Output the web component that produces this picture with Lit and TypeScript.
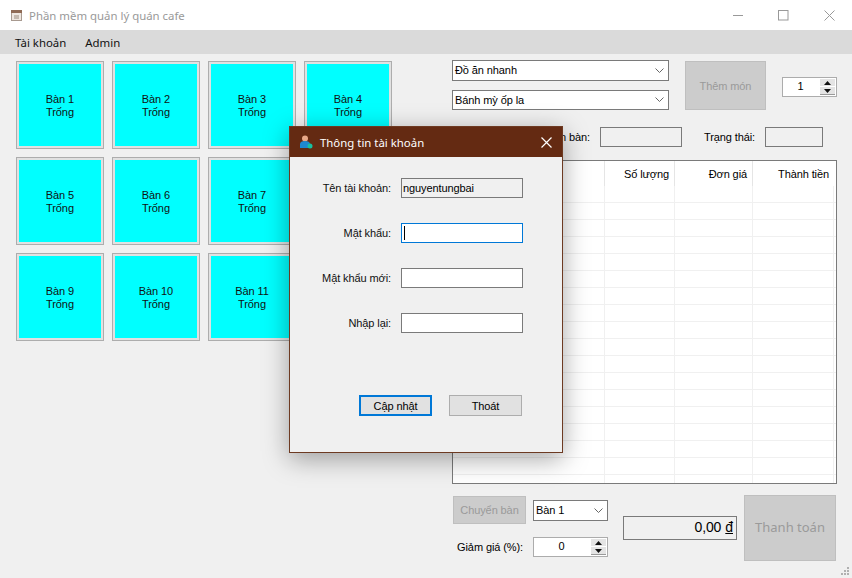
import { LitElement, html, css, svg } from 'lit';
import { customElement } from 'lit/decorators.js';

const chevron = svg`<svg class="chev" width="9" height="5" viewBox="0 0 9 5"><path d="M.5.5l4 4 4-4" fill="none" stroke="#666"/></svg>`;

const spinArrows = html`<div class="spin-btns">
  <div class="spin-btn"><svg width="7" height="4" viewBox="0 0 7 4"><path d="M3.5 0L7 4H0z" fill="#111"/></svg></div>
  <div class="spin-btn"><svg width="7" height="4" viewBox="0 0 7 4"><path d="M0 0h7L3.5 4z" fill="#111"/></svg></div>
</div>`;

@customElement('app-root')
export class AppRoot extends LitElement {
  static styles = css`
    :host {
      display: block;
      position: relative;
      width: 852px;
      height: 578px;
      overflow: hidden;
      background: #f0f0f0;
      font-family: 'Liberation Sans', Arial, sans-serif;
      font-size: 11px;
      letter-spacing: -0.1px;
      color: #000;
    }

    .titlebar {
      height: 30px;
      background: #fff;
      display: flex;
      align-items: center;
      padding-left: 10px;
      color: #999;
      font-family: 'Noto Sans', sans-serif;
      font-size: 11.4px;
      letter-spacing: 0;
    }

    .titlebar .app-icon {
      margin-right: 6px;
    }

    .win-btns {
      margin-left: auto;
      display: flex;
    }

    .win-btn {
      width: 46px;
      height: 30px;
      display: flex;
      align-items: center;
      justify-content: center;
    }

    .menu {
      height: 24px;
      background: #dadada;
      display: flex;
      align-items: center;
      padding-left: 15px;
      gap: 19px;
      font-family: 'Noto Sans', sans-serif;
      font-size: 11.4px;
      letter-spacing: 0;
      color: #111;
    }

    .main {
      display: flex;
      padding: 7px 15px 0 16px;
      gap: 60px;
    }

    .tables {
      display: grid;
      grid-template-columns: repeat(4, 88px);
      grid-auto-rows: 88px;
      gap: 8px;
      align-content: start;
    }

    .table {
      box-sizing: border-box;
      border: 1px solid #adadad;
      background: #e1e1e1;
      padding: 2px;
    }

    .table div {
      height: 100%;
      background: #0ff;
      display: flex;
      flex-direction: column;
      align-items: center;
      justify-content: center;
      line-height: 13px;
      padding-top: 2px;
      box-sizing: border-box;
      color: #111;
    }

    .right {
      width: 385px;
      margin-top: -1px;
      display: flex;
      flex-direction: column;
    }

    .order-top {
      display: flex;
      height: 50px;
    }

    .combos {
      width: 217px;
      display: flex;
      flex-direction: column;
      gap: 9px;
    }

    .combo {
      box-sizing: border-box;
      height: 21px;
      background: #fff;
      border: 1px solid #7a7a7a;
      display: flex;
      align-items: center;
      justify-content: space-between;
      padding: 0 4px 0 2px;
    }

    .btn-add {
      margin: 1px 0 0 16px;
      width: 81px;
      height: 49px;
    }

    .btn-off {
      box-sizing: border-box;
      background: #ccc;
      border: 1px solid #bfbfbf;
      color: #9a9a9a;
      display: flex;
      align-items: center;
      justify-content: center;
    }

    .spin {
      box-sizing: border-box;
      height: 20px;
      background: #fff;
      border: 1px solid #acacac;
      display: flex;
      align-items: center;
      justify-content: space-between;
    }

    .spin-top {
      width: 55px;
      margin: 17px 0 0 16px;
    }

    .spin-val {
      flex: 1;
      text-align: center;
      padding: 0 2px 2px 0;
    }

    .spin-btns {
      width: 15px;
      height: 16px;
      margin-right: 1px;
      display: flex;
      flex-direction: column;
      gap: 1px;
    }

    .spin-btn {
      flex: 1;
      background: #e4e4e4;
      display: flex;
      align-items: center;
      justify-content: center;
      border: 0 solid #9a9a9a;
    }

    .spin-btn:last-child {
      border-bottom-width: 1px;
    }

    .info {
      display: flex;
      justify-content: flex-end;
      align-items: center;
      height: 20px;
      margin-top: 17px;
      padding-right: 14px;
    }

    .info-label {
      margin-right: 10px;
      white-space: nowrap;
    }

    .info-label.status {
      width: 51px;
      text-align: right;
    }

    .box {
      box-sizing: border-box;
      height: 20px;
      border: 1px solid #7a7a7a;
      background: #f0f0f0;
    }

    .box-table {
      width: 82px;
      margin-right: 22px;
    }

    .box-status {
      width: 58px;
    }

    .grid {
      box-sizing: border-box;
      height: 324px;
      margin-top: 13px;
      background: #fff;
      border: 1px solid #7a7a7a;
      overflow: hidden;
    }

    .grid-head {
      display: grid;
      grid-template-columns: 152px 70px 78px 81px;
      height: 25px;
    }

    .grid-head div {
      box-sizing: border-box;
      border-right: 1px solid #e5e5e5;
      text-align: right;
      padding: 7px 5px 0 0;
    }

    .grid-head div:last-child {
      border-right: 0;
    }

    .grid-row {
      display: grid;
      grid-template-columns: 152px 70px 78px 81px;
      height: 17px;
      box-sizing: border-box;
      border-bottom: 1px solid #f0f0f0;
    }

    .grid-row div {
      border-right: 1px solid #f0f0f0;
    }

    .bottom {
      display: flex;
      margin-top: 12px;
    }

    .move {
      display: grid;
      grid-template-columns: 73px 75px;
      column-gap: 7px;
      row-gap: 13px;
      align-items: center;
      align-content: start;
      margin-left: 1px;
    }

    .btn-move {
      height: 28px;
    }

    .combo-move {
      height: 21px;
    }

    .discount-label {
      text-align: right;
      white-space: nowrap;
      padding-right: 3px;
    }

    .total {
      box-sizing: border-box;
      width: 114px;
      height: 24px;
      margin: 20px 0 0 15px;
      border: 1px solid #7a7a7a;
      font-size: 14px;
      display: flex;
      align-items: center;
      justify-content: flex-end;
      padding: 0 3px 2px 0;
    }

    .total u {
      margin-left: 4px;
    }

    .btn-pay {
      width: 92px;
      height: 66px;
      margin: -1px 0 0 7px;
      padding-bottom: 2px;
      font-size: 13px;
      letter-spacing: 0;
      font-family: 'Noto Sans', sans-serif;
    }

    .dialog {
      position: absolute;
      left: 289px;
      top: 126px;
      width: 274px;
      height: 327px;
      box-sizing: border-box;
      background: #f0f0f0;
      border: 1px solid #6d3a22;
      box-shadow: 0 6px 24px rgba(0, 0, 0, 0.35);
      display: flex;
      flex-direction: column;
    }

    .dlg-title {
      height: 30px;
      background: #642a12;
      color: #fff;
      display: flex;
      align-items: center;
      padding-left: 9px;
      font-family: 'Noto Sans', sans-serif;
      font-size: 11.4px;
      letter-spacing: 0;
      flex: none;
    }

    .dlg-title span {
      margin-left: 7px;
    }

    .dlg-title .x {
      margin-left: auto;
      margin-right: 10px;
    }

    .form {
      display: grid;
      grid-template-columns: 101px 122px;
      column-gap: 10px;
      row-gap: 25px;
      padding-top: 21px;
      align-items: center;
    }

    .form label {
      text-align: right;
      color: #111;
    }

    .field {
      box-sizing: border-box;
      height: 20px;
      background: #fff;
      border: 1px solid #7a7a7a;
      display: flex;
      align-items: center;
      padding-left: 1px;
    }

    .field.readonly {
      background: #f0f0f0;
    }

    .field.focus {
      border-color: #0078d7;
    }

    .caret {
      width: 1px;
      height: 14px;
      margin-left: 1px;
      background: #000;
    }

    .dlg-btns {
      display: flex;
      gap: 17px;
      padding: 62px 0 0 69px;
    }

    .dlg-btn {
      box-sizing: border-box;
      width: 73px;
      height: 21px;
      background: #e1e1e1;
      border: 1px solid #adadad;
      display: flex;
      align-items: center;
      justify-content: center;
    }

    .dlg-btn.primary {
      border: 2px solid #0078d7;
    }

    .grip {
      position: absolute;
      right: 2px;
      bottom: 2px;
    }
  `;

  render() {
    const tables = Array.from({ length: 12 }, (_, i) => i + 1);
    const rows = Array.from({ length: 18 });
    return html`
      <div class="titlebar">
        <svg class="app-icon" width="13" height="13" viewBox="0 0 13 13">
          <rect x="1.500" y="3.500" width="10" height="8" fill="#eee6df" stroke="#a89a90"/>
          <rect x="1" y="1" width="11" height="3" fill="#8f6a55"/>
          <rect x="4" y="6" width="5" height="4" fill="#c4b8ae"/>
        </svg>
        Phần mềm quản lý quán cafe
        <div class="win-btns">
          <div class="win-btn"><svg width="11" height="11" viewBox="0 0 11 11"><path d="M1 5.500h10" stroke="#999"/></svg></div>
          <div class="win-btn"><svg width="11" height="11" viewBox="0 0 11 11"><rect x=".5" y=".5" width="9.500" height="9.500" fill="none" stroke="#999"/></svg></div>
          <div class="win-btn"><svg width="11" height="11" viewBox="0 0 11 11"><path d="M.5.500l10 10M10.500.500l-10 10" stroke="#999"/></svg></div>
        </div>
      </div>
      <div class="menu"><span>Tài khoản</span><span>Admin</span></div>
      <div class="main">
        <div class="tables">
          ${tables.map(n => html`<div class="table"><div><span>Bàn ${n}</span><span>Trống</span></div></div>`)}
        </div>
        <div class="right">
          <div class="order-top">
            <div class="combos">
              <div class="combo">Đồ ăn nhanh ${chevron}</div>
              <div class="combo">Bánh mỳ ốp la ${chevron}</div>
            </div>
            <div class="btn-off btn-add">Thêm món</div>
            <div class="spin spin-top"><span class="spin-val">1</span>${spinArrows}</div>
          </div>
          <div class="info">
            <span class="info-label">Tên bàn:</span>
            <div class="box box-table"></div>
            <span class="info-label status">Trạng thái:</span>
            <div class="box box-status"></div>
          </div>
          <div class="grid">
            <div class="grid-head">
              <div></div><div>Số lượng</div><div>Đơn giá</div><div>Thành tiền</div>
            </div>
            ${rows.map(() => html`<div class="grid-row"><div></div><div></div><div></div><div></div></div>`)}
          </div>
          <div class="bottom">
            <div class="move">
              <div class="btn-off btn-move">Chuyển bàn</div>
              <div class="combo combo-move">Bàn 1 ${chevron}</div>
              <div class="discount-label">Giảm giá (%):</div>
              <div class="spin"><span class="spin-val">0</span>${spinArrows}</div>
            </div>
            <div class="total">0,00 <u>đ</u></div>
            <div class="btn-off btn-pay">Thanh toán</div>
          </div>
        </div>
      </div>

      <div class="dialog">
        <div class="dlg-title">
          <svg width="14" height="14" viewBox="0 0 14 14">
            <circle cx="6" cy="3.500" r="3" fill="#e8a888"/>
            <path d="M1 13V9c0-2 2-3 5-3s5 1 5 3v4z" fill="#1e88d0"/>
            <circle cx="11" cy="11" r="2.500" fill="#18c0a0"/>
          </svg>
          <span>Thông tin tài khoản</span>
          <svg class="x" width="11" height="11" viewBox="0 0 11 11"><path d="M.5.500l10 10M10.500.500l-10 10" stroke="#fff" stroke-width="1.200"/></svg>
        </div>
        <div class="form">
          <label>Tên tài khoản:</label><div class="field readonly">nguyentungbai</div>
          <label>Mật khẩu:</label><div class="field focus"><div class="caret"></div></div>
          <label>Mật khẩu mới:</label><div class="field"></div>
          <label>Nhập lại:</label><div class="field"></div>
        </div>
        <div class="dlg-btns">
          <div class="dlg-btn primary">Cập nhật</div>
          <div class="dlg-btn">Thoát</div>
        </div>
      </div>

      <svg class="grip" width="10" height="10" viewBox="0 0 10 10" fill="#b0b0b0">
        <rect x="7" y="1" width="2" height="2"/><rect x="4" y="4" width="2" height="2"/><rect x="7" y="4" width="2" height="2"/>
        <rect x="1" y="7" width="2" height="2"/><rect x="4" y="7" width="2" height="2"/><rect x="7" y="7" width="2" height="2"/>
      </svg>
    `;
  }
}
